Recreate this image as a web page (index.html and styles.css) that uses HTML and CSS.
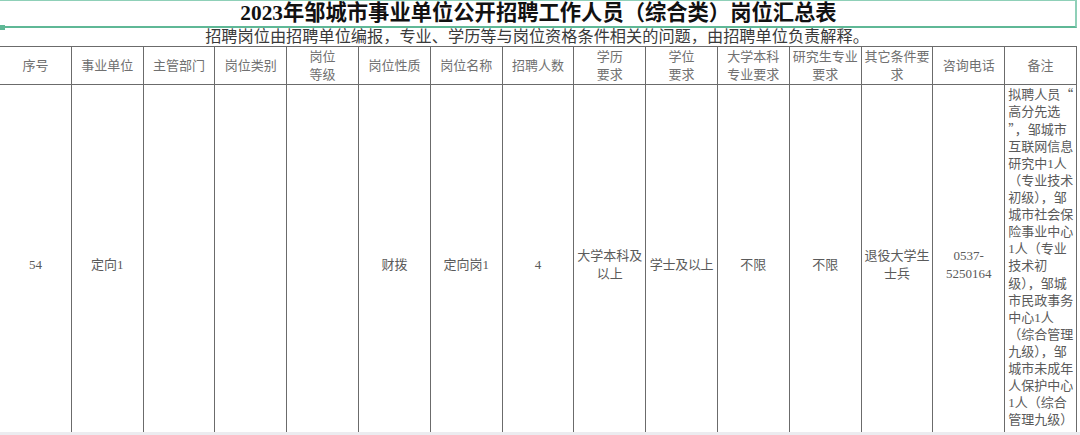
FILE: index.html
```html
<!DOCTYPE html>
<html lang="zh-CN">
<head>
<meta charset="utf-8">
<title>2023年邹城市事业单位公开招聘工作人员（综合类）岗位汇总表</title>
<link rel="stylesheet" href="styles.css">
</head>
<body>
<div class="sheet">
  <div class="title-row">
    <h1 class="title">2023年邹城市事业单位公开招聘工作人员（综合类）岗位汇总表</h1>
    <span class="handle"></span>
  </div>
  <div class="sub-row">招聘岗位由招聘单位编报，专业、学历等与岗位资格条件相关的问题，由招聘单位负责解释。</div>
  <table class="grid">
    <colgroup>
      <col><col><col><col><col><col><col><col><col><col><col><col><col><col><col>
    </colgroup>
    <thead>
      <tr>
        <th>序号</th>
        <th>事业单位</th>
        <th>主管部门</th>
        <th>岗位类别</th>
        <th>岗位<br>等级</th>
        <th>岗位性质</th>
        <th>岗位名称</th>
        <th>招聘人数</th>
        <th>学历<br>要求</th>
        <th>学位<br>要求</th>
        <th>大学本科<br>专业要求</th>
        <th>研究生专业<br>要求</th>
        <th>其它条件要<br>求</th>
        <th>咨询电话</th>
        <th>备注</th>
      </tr>
    </thead>
    <tbody>
      <tr class="data-row">
        <td>54</td>
        <td>定向1</td>
        <td></td>
        <td></td>
        <td></td>
        <td>财拨</td>
        <td>定向岗1</td>
        <td>4</td>
        <td>大学本科及<br>以上</td>
        <td class="tight">学士及以上</td>
        <td>不限</td>
        <td>不限</td>
        <td>退役大学生<br>士兵</td>
        <td>0537-<br>5250164</td>
        <td class="note">拟聘人员<span class="cjk">“</span><br>高分先选<br><span class="cjk">”，</span>邹城市<br>互联网信息<br>研究中1人<br>（专业技术<br>初级），邹<br>城市社会保<br>险事业中心<br>1人（专业<br>技术初<br>级），邹城<br>市民政事务<br>中心1人<br>（综合管理<br>九级），邹<br>城市未成年<br>人保护中心<br>1人（综合<br>管理九级）</td>
      </tr>
    </tbody>
  </table>
</div>
<div class="bottom-strip"></div>
</body>
</html>
```
FILE: styles.css
```css
html, body {
  margin: 0;
  padding: 0;
  background: #ffffff;
  overflow: hidden;
}

body {
  width: 1080px;
  height: 435px;
  font-family: "Liberation Serif", "Noto Sans CJK SC", serif;
  color: #555;
}

.sheet {
  width: 1080px;
}

.title-row {
  position: relative;
  width: 1075px;
  height: 25px;
  border-top: 1px solid #8fd0b8;
  border-bottom: 2px solid #5fb896;
  border-right: 2px solid #8fd0b8;
  display: flex;
  align-items: center;
  justify-content: center;
}

.title {
  margin: 0;
  font-size: 21.3px;
  line-height: 25px;
  font-weight: bold;
  color: #111;
  padding-left: 2px;
}

.handle {
  position: absolute;
  left: 0;
  bottom: -4px;
  width: 5px;
  height: 5px;
  background: #5fb896;
}

.sub-row {
  height: 18px;
  line-height: 18px;
  font-size: 16.2px;
  text-align: center;
  color: #3a3a3a;
  padding-right: 6px;
  white-space: nowrap;
}

.grid {
  margin-left: -1px;
  width: 1078px;
  table-layout: fixed;
  border-collapse: collapse;
}

.grid th,
.grid td {
  border: 1px solid #6b6b6b;
  padding: 0;
  text-align: center;
  vertical-align: middle;
  font-weight: normal;
  font-size: 13px;
  line-height: 18px;
  overflow: hidden;
  white-space: nowrap;
}

.grid th {
  height: 37px;
  color: #707070;
}

.grid td {
  color: #5a5a5a;
}

.data-row td {
  height: 360px;
}

.grid td.tight {
  letter-spacing: -0.3px;
}

.grid td.note {
  vertical-align: top;
  text-align: left;
  padding: 0 0 0 3px;
  line-height: 17.05px;
}

.cjk {
  font-family: "Noto Sans CJK SC", sans-serif;
}

.bottom-strip {
  position: absolute;
  left: 0;
  bottom: 0;
  width: 1080px;
  height: 3px;
  background: #ececf0;
}
```
